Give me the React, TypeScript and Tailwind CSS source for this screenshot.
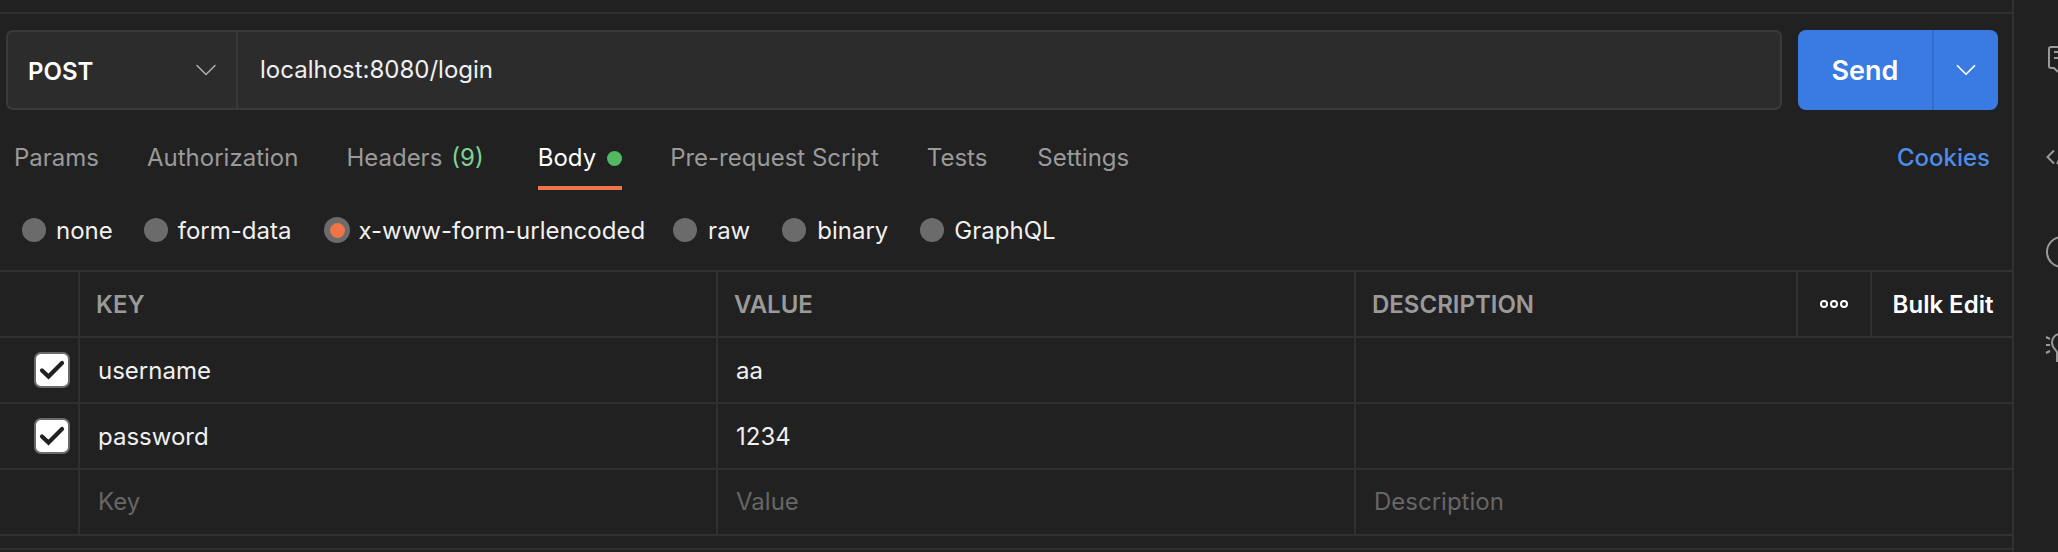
import { ChevronDown } from 'lucide-react'

const font = { fontFamily: 'Inter, "Liberation Sans", sans-serif' }

const tabs = [
  { label: 'Params' },
  { label: 'Authorization' },
  { label: 'Headers', count: '(9)' },
  { label: 'Body', active: true },
  { label: 'Pre-request Script' },
  { label: 'Tests' },
  { label: 'Settings' },
]

const bodyTypes = ['none', 'form-data', 'x-www-form-urlencoded', 'raw', 'binary', 'GraphQL']

function Check() {
  return (
    <div className="flex h-[36px] w-[36px] items-center justify-center rounded-[7px] border-2 border-[#6b6b6b] bg-white">
      <svg width="32" height="32" viewBox="0 0 32 32" fill="none">
        <path d="M6 16.5L12.5 22.5L26 9" stroke="#212121" strokeWidth="4.2" strokeLinecap="round" />
      </svg>
    </div>
  )
}

function Row({ name, value, last }: { name: string; value: string; last?: boolean }) {
  const color = last ? 'text-[#666666]' : 'pt-[2px] text-[#f0f0f0]'
  return (
    <div className="flex h-[66px] border-b-2 border-[#303030]">
      <div className="flex w-[80px] shrink-0 items-center justify-end border-r-2 border-[#303030] pr-[8px]">
        {!last && <Check />}
      </div>
      <div className={`flex w-[638px] shrink-0 items-center border-r-2 border-[#303030] pl-[18px] text-[24px] ${color}`}>{name}</div>
      <div className={`flex w-[638px] shrink-0 items-center border-r-2 border-[#303030] pl-[18px] text-[24px] ${color}`}>{value}</div>
      <div className={`flex flex-1 items-center pl-[18px] text-[24px] ${color}`}>{last ? 'Description' : ''}</div>
    </div>
  )
}

export default function App() {
  return (
    <div className="flex h-[552px] w-[2058px] overflow-hidden bg-[#212121]" style={font}>
      <main className="w-[2014px] shrink-0 border-r-2 border-[#303030]">
        <div className="mt-[12px] h-[2px] bg-[#303030]" />

        {/* Request bar */}
        <div className="mt-[16px] flex h-[80px] items-stretch pl-[6px] pr-[14px]">
          <div className="flex flex-1 rounded-[7px] border-2 border-[#3a3a3a] bg-[#2c2c2c]">
            <div className="flex w-[230px] items-center justify-between border-r-2 border-[#3a3a3a] pl-[20px] pr-[12px]">
              <span className="pt-[3px] text-[24px] font-semibold text-white">POST</span>
              <ChevronDown size={36} strokeWidth={1} className="text-[#b0b0b0]" />
            </div>
            <div className="flex flex-1 items-center pl-[22px] text-[24px] text-[#f0f0f0]">localhost:8080/login</div>
          </div>
          <div className="ml-[16px] flex w-[200px] rounded-[8px] bg-[#3a7be3] text-white">
            <div className="flex w-[136px] items-center justify-center border-r-2 border-[#336dca] pt-[2px] text-[27px] font-semibold">Send</div>
            <div className="flex flex-1 items-center justify-center">
              <ChevronDown size={34} strokeWidth={1.2} />
            </div>
          </div>
        </div>

        {/* Tabs */}
        <div className="mt-[14px] flex h-[66px] items-start justify-between pl-[14px] pr-[22px]">
          <div className="flex gap-[48px]">
            {tabs.map((t) => (
              <div key={t.label} className={`flex h-[66px] items-center border-b-4 pt-[6px] text-[24px] ${t.active ? 'gap-[11px] border-[#ef7549] text-white' : 'gap-[9px] border-transparent text-[#9a9a9a]'} ${t.count ? 'mr-[6px]' : ''} ${t.label === 'Settings' ? 'ml-[2px]' : ''}`}>
                <span>{t.label}</span>
                {t.count && <span className="text-[#7fd193]">{t.count}</span>}
                {t.active && <span className="h-[15px] w-[15px] rounded-full bg-[#52b963]" />}
              </div>
            ))}
          </div>
          <div className="text-[24px] leading-[68px] font-medium text-[#4c8de8]">Cookies</div>
        </div>

        {/* Body type radios */}
        <div className="mt-[10px] flex h-[60px] items-center gap-[31px] pl-[22px]">
          {bodyTypes.map((b, i) => (
            <div key={b} className={`flex items-center text-[24px] text-[#f0f0f0] ${i === 2 ? 'ml-[2px] mr-[-3px] gap-[8px]' : i === 3 || i === 4 ? 'gap-[11px]' : 'gap-[10px]'} ${i === 3 ? 'mr-[1px]' : ''} ${i === 4 ? 'mr-[1px]' : ''}`}>
              {i === 2 ? (
                <span className="flex h-[26px] w-[26px] items-center justify-center rounded-full bg-[#6b6b6b]">
                  <span className="h-[15px] w-[15px] rounded-full bg-[#ef7549]" />
                </span>
              ) : (
                <span className="h-[24px] w-[24px] rounded-full bg-[#6b6b6b]" />
              )}
              <span className="pt-[2px]">{b}</span>
            </div>
          ))}
        </div>

        {/* Table */}
        <div className="mt-[10px] border-t-2 border-[#303030]">
          <div className="flex h-[66px] border-b-2 border-[#303030]">
            <div className="w-[80px] shrink-0 border-r-2 border-[#303030]" />
            <div className="flex w-[638px] shrink-0 items-center border-r-2 border-[#303030] pl-[16px] pt-[2px] text-[24px] font-semibold text-[#9a9a9a]">KEY</div>
            <div className="flex w-[638px] shrink-0 items-center border-r-2 border-[#303030] pl-[16px] pt-[2px] text-[24px] font-semibold text-[#9a9a9a]">VALUE</div>
            <div className="flex w-[442px] shrink-0 items-center border-r-2 border-[#303030] pl-[16px] pt-[2px] text-[24px] font-semibold text-[#9a9a9a]">DESCRIPTION</div>
            <div className="flex w-[74px] shrink-0 items-center justify-center gap-[2px] border-r-2 border-[#303030]">
              <span className="h-[8px] w-[8px] rounded-full border-2 border-white" />
              <span className="h-[8px] w-[8px] rounded-full border-2 border-white" />
              <span className="h-[8px] w-[8px] rounded-full border-2 border-white" />
            </div>
            <div className="flex flex-1 items-center justify-center pl-[2px] pt-[2px] text-[24px] font-semibold text-white">Bulk Edit</div>
          </div>
          <Row name="username" value="aa" />
          <Row name="password" value="1234" />
          <Row name="Key" value="Value" last />
        </div>
        <div className="mt-[12px] h-[2px] bg-[#303030]" />
      </main>

      {/* Right rail, icons run off the window edge */}
      <aside className="flex flex-1 flex-col overflow-hidden pt-[46px] text-[#9a9a9a]">
        <svg className="shrink-0" width="44" height="28" viewBox="0 0 44 28" fill="none" stroke="currentColor" strokeWidth="2">
          <path d="M44 1H37a2 2 0 0 0-2 2v17a2 2 0 0 0 2 2h3l4 4" />
          <path d="M40 6h4M40 12h4" />
        </svg>
        <svg className="mt-[75px] shrink-0" width="44" height="16" viewBox="0 0 44 16" fill="none" stroke="currentColor" strokeWidth="2">
          <path d="M40 1.5L33.5 8l6.5 6.5" />
          <path d="M43 15l2-4" />
        </svg>
        <svg className="mt-[71px] shrink-0" width="44" height="32" viewBox="0 0 44 32" fill="none" stroke="currentColor" strokeWidth="2">
          <circle cx="48" cy="16" r="15" />
        </svg>
        <svg className="mt-[65px] shrink-0" width="44" height="30" viewBox="0 0 44 30" fill="none" stroke="currentColor" strokeWidth="2">
          <path d="M46 1c-5 0-8 4-8 9 0 4 3 6 5 9v10" />
          <path d="M32 4l4 2M32 12h4M32 20l4-2" />
        </svg>
      </aside>
    </div>
  )
}
